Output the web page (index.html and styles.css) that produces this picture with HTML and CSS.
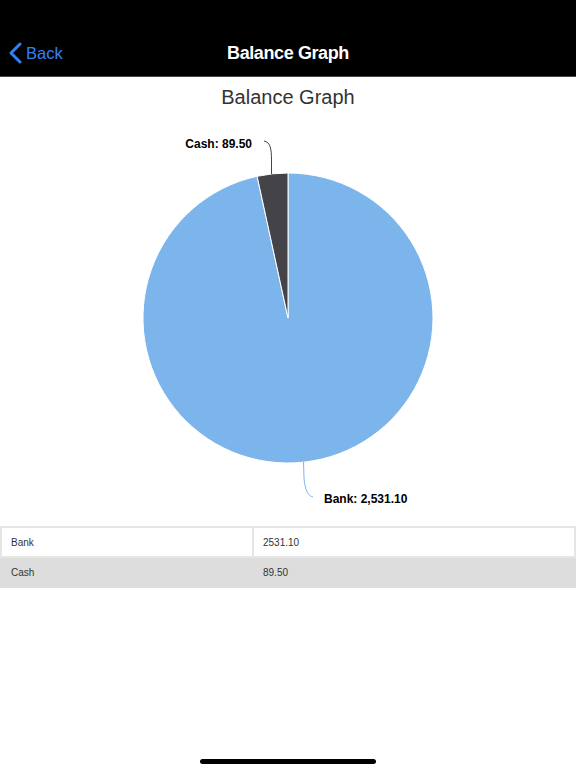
FILE: index.html
```html
<!DOCTYPE html>
<html>
<head>
<meta charset="utf-8">
<link rel="stylesheet" href="styles.css">
</head>
<body>
<div class="nav">
  <div class="back">
    <svg class="chev" width="14" height="22" viewBox="0 0 14 22"><path d="M11 2 L2 11 L11 20" fill="none" stroke="#3380f6" stroke-width="3" stroke-linecap="round" stroke-linejoin="round"/></svg>
    <span>Back</span>
  </div>
  <div class="title">Balance Graph</div>
</div>
<svg class="chart" width="576" height="449" viewBox="0 77 576 449">
  <text x="288" y="103.5" text-anchor="middle" class="ctitle">Balance Graph</text>
  <path d="M288 318 L288 173 A145 145 0 1 1 257.13 176.32 Z" fill="#7cb5ec" stroke="#ffffff" stroke-width="1"/>
  <path d="M288 318 L257.13 176.32 A145 145 0 0 1 288 173 Z" fill="#434348" stroke="#ffffff" stroke-width="1"/>
  <path d="M271.5 174 L271.5 160 C271.5 148 270 142 264 141" fill="none" stroke="#434348" stroke-width="1"/>
  <path d="M303.5 462 L304 478 C305 490 308 496 313 497" fill="none" stroke="#7cb5ec" stroke-width="1"/>
  <text x="252" y="148" text-anchor="end" class="lbl">Cash: 89.50</text>
  <text x="324" y="503" class="lbl">Bank: 2,531.10</text>
</svg>
<table class="data">
  <tr class="r1"><td class="c1">Bank</td><td>2531.10</td></tr>
  <tr class="r2"><td class="c1">Cash</td><td>89.50</td></tr>
</table>
<div class="home"></div>
</body>
</html>
```
FILE: styles.css
```css
html, body { margin: 0; padding: 0; background: #fff; }
body { font-family: "Liberation Sans", Arial, sans-serif; width: 576px; height: 768px; overflow: hidden; position: relative; }
.nav { height: 76px; background: #000; border-bottom: 1px solid #4a4a4a; position: relative; display: flex; align-items: flex-end; }
.back { display: flex; align-items: center; color: #3380f6; font-size: 16.5px; padding-left: 9px; padding-bottom: 0; height: 46px; position: relative; z-index: 1; }
.back span { margin-left: 3px; }
.chev { display: block; }
.title { position: absolute; left: 0; right: 0; bottom: 12px; text-align: center; color: #fff; font-weight: bold; font-size: 18px; letter-spacing: -0.4px; }
.chart { display: block; }
.ctitle { font-family: "Liberation Sans", Arial, sans-serif; font-size: 20px; fill: #333333; }
.lbl { font-family: "Liberation Sans", Arial, sans-serif; font-size: 12px; font-weight: bold; fill: #000; }
.data { width: 576px; border-collapse: collapse; font-size: 10px; color: #333; table-layout: fixed; }
.data td { height: 27px; padding: 1px 9px 0; border: 2px solid #e6e6e6; }
.data td.c1 { width: 232px; }
.r2 td { background: #dddddd; border-color: #dddddd; }
.home { position: absolute; left: 200px; top: 759px; width: 176px; height: 5px; border-radius: 3px; background: #000; }
```
